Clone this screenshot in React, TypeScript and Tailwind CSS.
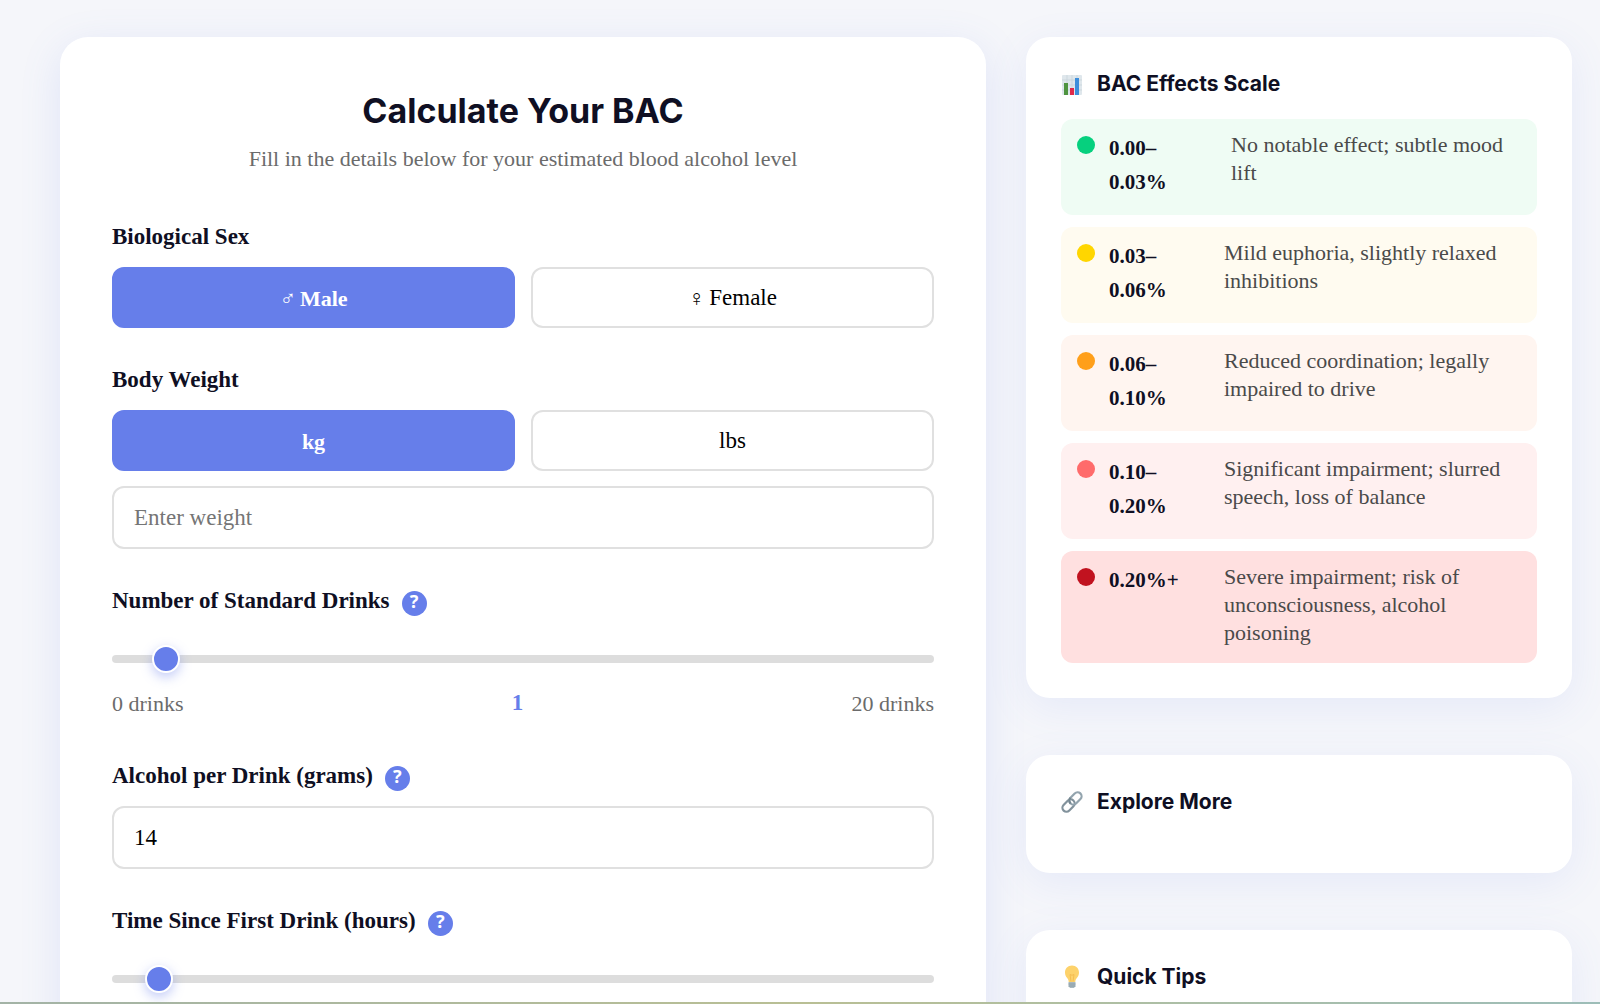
import React, { useState } from 'react';

const effects = [
  { from: '0.00–', to: '0.03%', text: 'No notable effect; subtle mood lift', row: 'bg-[#effcf4]', dot: 'bg-[#06d07e]', range: 'w-[108px]' },
  { from: '0.03–', to: '0.06%', text: 'Mild euphoria, slightly relaxed inhibitions', row: 'bg-[#fffbf0]', dot: 'bg-[#ffd600]', range: 'w-[101px]' },
  { from: '0.06–', to: '0.10%', text: 'Reduced coordination; legally impaired to drive', row: 'bg-[#fff5f0]', dot: 'bg-[#ff9f1a]', range: 'w-[101px]' },
  { from: '0.10–', to: '0.20%', text: 'Significant impairment; slurred speech, loss of balance', row: 'bg-[#fff0f0]', dot: 'bg-[#ff6b6b]', range: 'w-[101px]' },
  { from: '0.20%+', to: '', text: 'Severe impairment; risk of unconsciousness, alcohol poisoning', row: 'bg-[#ffe0e0]', dot: 'bg-[#c1121f]', range: 'w-[101px]' },
];

const sexes = [
  { id: 'male', symbol: '♂', label: 'Male' },
  { id: 'female', symbol: '♀', label: 'Female' },
];

const units = [
  { id: 'kg', label: 'kg' },
  { id: 'lbs', label: 'lbs' },
];

const labelClass = 'text-[23px] leading-7 font-bold text-[#0f0f23]';

const sliderClass =
  'block h-2 w-full cursor-pointer appearance-none rounded-full bg-[#dddddd] outline-none [&::-webkit-slider-thumb]:h-7 [&::-webkit-slider-thumb]:w-7 [&::-webkit-slider-thumb]:appearance-none [&::-webkit-slider-thumb]:rounded-full [&::-webkit-slider-thumb]:border-2 [&::-webkit-slider-thumb]:border-white [&::-webkit-slider-thumb]:bg-[#667eea] [&::-webkit-slider-thumb]:shadow-[0_4px_12px_rgba(102,126,234,0.4)]';

const inputClass =
  'block h-[63px] w-full rounded-xl border-2 border-[#e0e0e0] bg-white px-5 text-[23px] text-black outline-none placeholder:text-[#757575] focus:border-[#667eea]';

function ChartIcon() {
  return (
    <svg width="22" height="24" viewBox="0 0 22 24" aria-hidden="true">
      <rect x="1" y="3" width="20" height="20" rx="1" fill="#dfe7ec" />
      <path d="M1 8h20M1 13h20M1 18h20M6 3v20M11 3v20M16 3v20" stroke="#c6d3da" strokeWidth="0.7" />
      <rect x="3" y="11" width="4" height="12" fill="#4f9440" />
      <rect x="9" y="16" width="4" height="7" fill="#e0294a" />
      <rect x="14" y="6" width="4" height="17" fill="#3d8edb" />
    </svg>
  );
}

function LinkIcon() {
  return (
    <svg width="22" height="24" viewBox="0 0 22 24" fill="none" aria-hidden="true">
      <g transform="rotate(-46 11 12)" strokeWidth="2.2">
        <rect x="-1" y="8" width="14" height="8" rx="4" stroke="#82929c" />
        <rect x="9" y="8" width="14" height="8" rx="4" stroke="#93a4ae" />
        <path d="M9 12a4 4 0 0 1 4-4" stroke="#748690" />
      </g>
    </svg>
  );
}

function BulbIcon() {
  return (
    <svg width="22" height="24" viewBox="0 0 22 24" aria-hidden="true">
      <path d="M11 .5C6.800.5 4 3.500 4 7.400c0 2.400 1 4.200 2.200 5.700 1 1.300 1.400 2.300 1.500 4h6.600c.1-1.700.5-2.700 1.500-4C17 11.600 18 9.800 18 7.400 18 3.500 15.200.5 11 .5z" fill="#fdd26b" />
      <path d="M9 9.500l1 7M13 9.500l-1 7M9 9.500q2 1.500 4 0" stroke="#f2b84b" strokeWidth="0.800" fill="none" />
      <path d="M7.500 17h7v4.200l-1.600 1.800H9.100l-1.600-1.800z" fill="#a9b9c1" />
      <path d="M7.500 19h7M7.800 21h6.400" stroke="#84959e" strokeWidth="0.800" />
    </svg>
  );
}

function Help({ topic }: { topic: string }) {
  return (
    <button
      type="button"
      aria-label={`About ${topic}`}
      className="mt-1 flex h-[25px] w-[25px] items-center justify-center rounded-full bg-[#667eea] pb-1 font-['Noto_Sans',sans-serif] text-[18px] leading-none font-bold text-white"
    >
      ?
    </button>
  );
}

type Option = { id: string; symbol?: string; label: string };

function Toggle({ options, value, onChange }: { options: Option[]; value: string; onChange: (v: string) => void }) {
  return (
    <div className="grid grid-cols-2 gap-4">
      {options.map((option) => (
        <button
          key={option.id}
          type="button"
          aria-pressed={value === option.id}
          onClick={() => onChange(option.id)}
          className={
            value === option.id
              ? 'flex h-[61px] items-center justify-center gap-1 rounded-xl border-2 border-[#667eea] bg-[#667eea] pt-0.5 text-[22px] font-bold text-white'
              : 'flex h-[61px] items-center justify-center gap-1 rounded-xl border-2 border-[#e0e0e0] bg-white pt-0.5 text-[23px] text-black'
          }
        >
          {option.symbol && <span className="font-['DejaVu_Sans',sans-serif] font-extralight">{option.symbol}</span>}
          <span>{option.label}</span>
        </button>
      ))}
    </div>
  );
}

function SideCard({ icon, title, children }: { icon: React.ReactNode; title: string; children?: React.ReactNode }) {
  return (
    <section className="rounded-3xl bg-white p-[35px] shadow-[0_10px_40px_rgba(102,126,234,0.1)]">
      <h2 className="flex h-6 items-center gap-[14px] font-['Inter',sans-serif] text-[21px] font-bold text-[#0f0f23]">
        {icon}
        {title}
      </h2>
      {children}
    </section>
  );
}

export default function App() {
  const [sex, setSex] = useState('male');
  const [unit, setUnit] = useState('kg');
  const [drinks, setDrinks] = useState(1);
  const [hours, setHours] = useState(1);

  return (
    <main className="relative h-screen overflow-hidden bg-[#f5f6fa] pt-[37px] pr-7 pl-[60px] font-['Liberation_Serif',serif]">
      <div className="grid grid-cols-[926fr_546fr] gap-10">
        {/* Calculator */}
        <section className="rounded-[28px] bg-white px-[52px] pt-[52px] pb-20 shadow-[0_10px_40px_rgba(102,126,234,0.15)]">
          <header className="text-center">
            <h1 className="font-['Inter',sans-serif] text-[34px] leading-[44px] font-bold text-[#0f0f23]">Calculate Your BAC</h1>
            <p className="mt-3 text-[22px] leading-7 text-[#6b6b6b]">Fill in the details below for your estimated blood alcohol level</p>
          </header>

          <form className="mt-[50px]">
            <div>
              <div className={`mb-4 ${labelClass}`}>Biological Sex</div>
              <Toggle options={sexes} value={sex} onChange={setSex} />
            </div>

            <div className="mt-[38px]">
              <label htmlFor="weight" className={`mb-4 block ${labelClass}`}>Body Weight</label>
              <Toggle options={units} value={unit} onChange={setUnit} />
              <input id="weight" type="text" placeholder="Enter weight" className={`mt-[15px] ${inputClass}`} />
            </div>

            <div className="mt-[38px]">
              <div className="flex h-7 items-center gap-3">
                <label htmlFor="drinks" className={labelClass}>Number of Standard Drinks</label>
                <Help topic="standard drinks" />
              </div>
              <div className="pt-10 pb-[26px]">
                <input id="drinks" type="range" min={0} max={20} value={drinks} onChange={(e) => setDrinks(+e.target.value)} className={sliderClass} />
              </div>
              <div className="flex h-7 items-center justify-between text-[22px] text-[#6b6b6b]">
                <span>0 drinks</span>
                <span className="text-[23px] font-bold text-[#667eea]">{drinks}</span>
                <span>20 drinks</span>
              </div>
            </div>

            <div className="mt-[45px]">
              <div className="mb-4 flex h-7 items-center gap-3">
                <label htmlFor="grams" className={labelClass}>Alcohol per Drink (grams)</label>
                <Help topic="alcohol per drink" />
              </div>
              <input id="grams" type="text" defaultValue="14" className={inputClass} />
            </div>

            <div className="mt-[38px]">
              <div className="flex h-7 items-center gap-3">
                <label htmlFor="hours" className={labelClass}>Time Since First Drink (hours)</label>
                <Help topic="time since first drink" />
              </div>
              <div className="pt-10">
                <input id="hours" type="range" min={0} max={24} value={hours} onChange={(e) => setHours(+e.target.value)} className={sliderClass} />
              </div>
            </div>
          </form>
        </section>

        {/* Sidebar */}
        <aside className="flex flex-col gap-[57px]">
          <SideCard icon={<ChartIcon />} title="BAC Effects Scale">
            <ul className="mt-[23px] flex flex-col gap-3">
              {effects.map((e) => (
                <li key={e.from} className={`flex min-h-24 items-start rounded-xl px-4 pt-3 pb-4 ${e.row}`}>
                  <span className={`mt-[5px] mr-[14px] h-[18px] w-[18px] shrink-0 rounded-full ${e.dot}`} />
                  <span className={`mr-[14px] shrink-0 text-[21px] leading-[34px] font-bold text-[#0f0f23] ${e.range}`}>
                    {e.from}
                    {e.to && <br />}
                    {e.to}
                  </span>
                  <span className="text-[22px] leading-7 text-[#4a4a4a]">{e.text}</span>
                </li>
              ))}
            </ul>
          </SideCard>
          <SideCard icon={<LinkIcon />} title="Explore More">
            <div className="h-6" />
          </SideCard>
          <SideCard icon={<BulbIcon />} title="Quick Tips">
            <div className="h-40" />
          </SideCard>
        </aside>
      </div>
      <div className="absolute inset-x-0 bottom-0 h-[2px] bg-linear-to-r from-[#a3b3a6] via-[#b9bf94] to-[#9dbdb8]" />
    </main>
  );
}
